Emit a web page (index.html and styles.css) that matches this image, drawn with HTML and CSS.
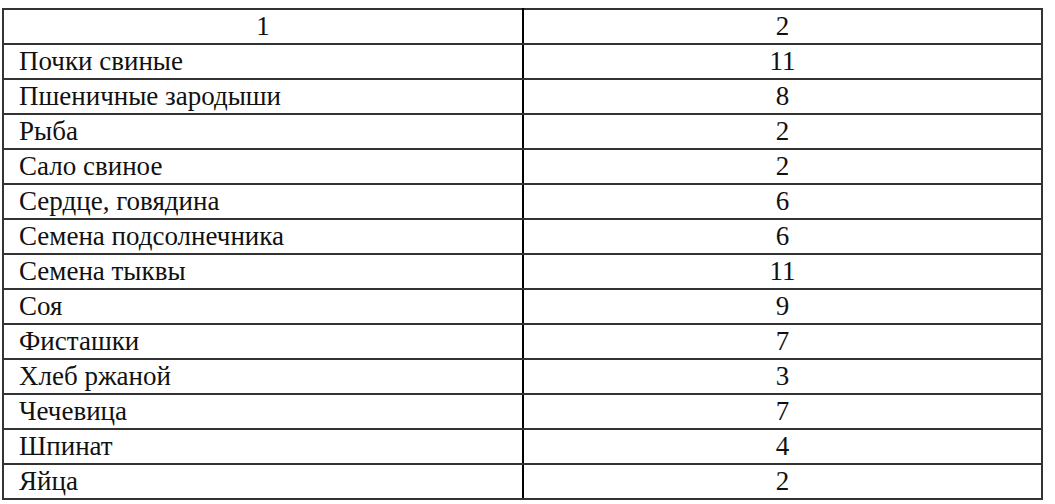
FILE: index.html
```html
<!DOCTYPE html>
<html lang="ru">
<head>
<meta charset="utf-8">
<link rel="stylesheet" href="styles.css">
</head>
<body>
<table class="data">
  <colgroup><col class="name-col"><col class="val-col"></colgroup>
  <tr class="head"><td class="c">1</td><td class="c">2</td></tr>
  <tr><td>Почки свиные</td><td class="c">11</td></tr>
  <tr><td>Пшеничные зародыши</td><td class="c">8</td></tr>
  <tr><td>Рыба</td><td class="c">2</td></tr>
  <tr><td>Сало свиное</td><td class="c">2</td></tr>
  <tr><td>Сердце, говядина</td><td class="c">6</td></tr>
  <tr><td>Семена подсолнечника</td><td class="c">6</td></tr>
  <tr><td>Семена тыквы</td><td class="c">11</td></tr>
  <tr><td>Соя</td><td class="c">9</td></tr>
  <tr><td>Фисташки</td><td class="c">7</td></tr>
  <tr><td>Хлеб ржаной</td><td class="c">3</td></tr>
  <tr><td>Чечевица</td><td class="c">7</td></tr>
  <tr><td>Шпинат</td><td class="c">4</td></tr>
  <tr><td>Яйца</td><td class="c">2</td></tr>
</table>
</body>
</html>
```
FILE: styles.css
```css
html, body {
  margin: 0;
  padding: 0;
  background: #fff;
}
body {
  padding: 8px 0 0 2px;
}
.data {
  border-collapse: collapse;
  width: 1041px;
  table-layout: fixed;
  font-family: "Liberation Serif", "Times New Roman", serif;
  font-size: 27px;
  color: #111;
}
.name-col {
  width: 520px;
}
.data td {
  border: 2px solid #333;
  height: 33px;
  padding: 0 0 0 15px;
  line-height: 33px;
  white-space: nowrap;
  vertical-align: middle;
}
.data td:first-child {
  border-right-color: #000;
}
.data td.c {
  text-align: center;
  padding: 0;
}
```
